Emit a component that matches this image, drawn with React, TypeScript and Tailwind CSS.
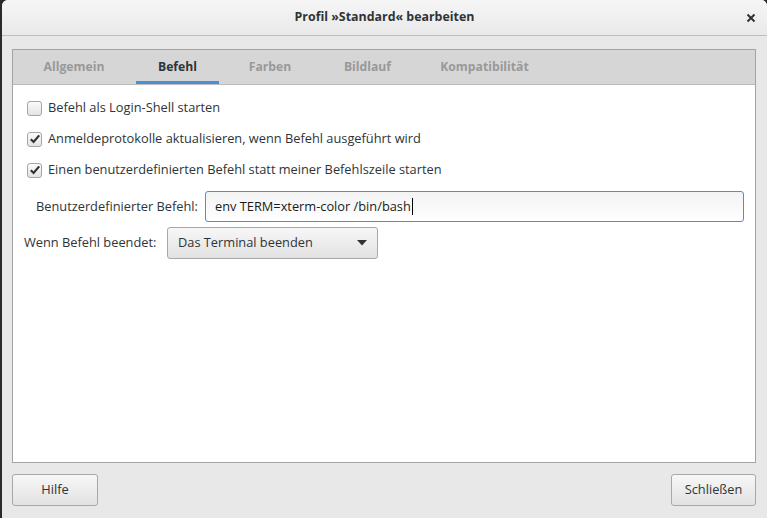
import React from "react";

const font = { fontFamily: '"Open Sans", "Noto Sans", sans-serif' };

function Check({ checked }: { checked?: boolean }) {
  return (
    <div className="w-[15px] h-[15px] rounded-[3px] border border-[#a5a5a5] bg-gradient-to-b from-[#fbfbfb] to-[#e4e4e4] flex items-center justify-center shrink-0">
      {checked && (
        <svg width="12" height="12" viewBox="0 0 12 12">
          <path d="M1.8 6.2 L4.6 9 L10.2 2.4" fill="none" stroke="#2e3436" strokeWidth="2.2" />
        </svg>
      )}
    </div>
  );
}

function Tab({ label, active }: { label: string; active?: boolean }) {
  return (
    <div
      className={
        "h-full flex items-center justify-center font-bold text-[12.2px] border-b-[3px] pt-[3px] " +
        (active ? "text-[#2e3436] border-[#4a90d9]" : "text-[#999999] border-transparent")
      }
    >
      {label}
    </div>
  );
}

export default function App() {
  return (
    <div className="w-[767px] h-[518px] bg-[#2a2a2a] flex" style={font}>
      <div className="ml-[2px] flex-1 flex flex-col bg-[#e8e8e8] rounded-t-[6px] overflow-hidden">
        <div className="h-[36px] shrink-0 relative flex items-center justify-center bg-gradient-to-b from-[#f6f6f6] to-[#e9e9e9] border-b border-[#bdbdbd]">
          <span className="font-bold text-[12.4px] text-[#2e3436]">Profil »Standard« bearbeiten</span>
          <svg className="absolute left-[744px] top-[13px]" width="10" height="10" viewBox="0 0 10 10">
            <path d="M1.5 1.5 L8.5 8.5 M8.5 1.5 L1.5 8.5" stroke="#2e3436" strokeWidth="2" />
          </svg>
        </div>
        <div className="ml-[10px] mt-[13px] w-[744px] h-[414px] border border-[#a3a3a3] flex flex-col bg-white">
          <div className="h-[35px] shrink-0 bg-[#d6d6d6] border-b border-[#bcbcbc] flex pl-[18px]">
            <div className="w-[86px]"><Tab label="Allgemein" /></div>
            <div className="w-[19px]" />
            <div className="w-[83px]"><Tab label="Befehl" active /></div>
            <div className="w-[10px]" />
            <div className="w-[82px]"><Tab label="Farben" /></div>
            <div className="w-[14px]" />
            <div className="w-[85px]"><Tab label="Bildlauf" /></div>
            <div className="w-[12px]" />
            <div className="w-[125px]"><Tab label="Kompatibilität" /></div>
          </div>
          <div className="flex-1 flex flex-col text-[12.8px] text-[#2e3436]">
            <div className="flex items-center gap-[6px] pl-[14px] mt-[15px] h-[16px]">
              <Check />
              <span>Befehl als Login-Shell starten</span>
            </div>
            <div className="flex items-center gap-[6px] pl-[14px] mt-[15px] h-[16px]">
              <Check checked />
              <span>Anmeldeprotokolle aktualisieren, wenn Befehl ausgeführt wird</span>
            </div>
            <div className="flex items-center gap-[6px] pl-[14px] mt-[15px] h-[16px]">
              <Check checked />
              <span>Einen benutzerdefinierten Befehl statt meiner Befehlszeile starten</span>
            </div>
            <div className="flex items-center mt-[13px] pl-[23px]">
              <span className="w-[169px]">Benutzerdefinierter Befehl:</span>
              <div className="w-[539px] h-[31px] rounded-[3px] border border-[#4a90d9] bg-gradient-to-b from-[#f3f3f3] to-white flex items-center pl-[9px]">
                <span className="text-[#1a1a1a]">env TERM=xterm-color /bin/bash</span>
                <span className="w-px h-[17px] bg-black ml-[1px]" />
              </div>
            </div>
            <div className="flex items-center mt-[5px] pl-[11px]">
              <span className="w-[143px]">Wenn Befehl beendet:</span>
              <div className="w-[211px] h-[32px] rounded-[3px] border border-[#a8a8a8] bg-gradient-to-b from-[#f7f7f7] to-[#e2e2e2] flex items-center justify-between pl-[10px] pr-[10px]">
                <span>Das Terminal beenden</span>
                <svg width="10" height="6" viewBox="0 0 10 6">
                  <path d="M0 0 L10 0 L5 5.5 Z" fill="#2e3436" />
                </svg>
              </div>
            </div>
          </div>
        </div>
        <div className="flex justify-between ml-[10px] w-[744px] mt-[11px]">
          <div className="w-[86px] h-[32px] rounded-[3px] border border-[#a8a8a8] bg-gradient-to-b from-[#f7f7f7] to-[#e2e2e2] flex items-center justify-center text-[12.8px] text-[#2e3436]">
            Hilfe
          </div>
          <div className="w-[85px] h-[32px] rounded-[3px] border border-[#a8a8a8] bg-gradient-to-b from-[#f7f7f7] to-[#e2e2e2] flex items-center justify-center text-[12.8px] text-[#2e3436]">
            Schließen
          </div>
        </div>
      </div>
    </div>
  );
}
